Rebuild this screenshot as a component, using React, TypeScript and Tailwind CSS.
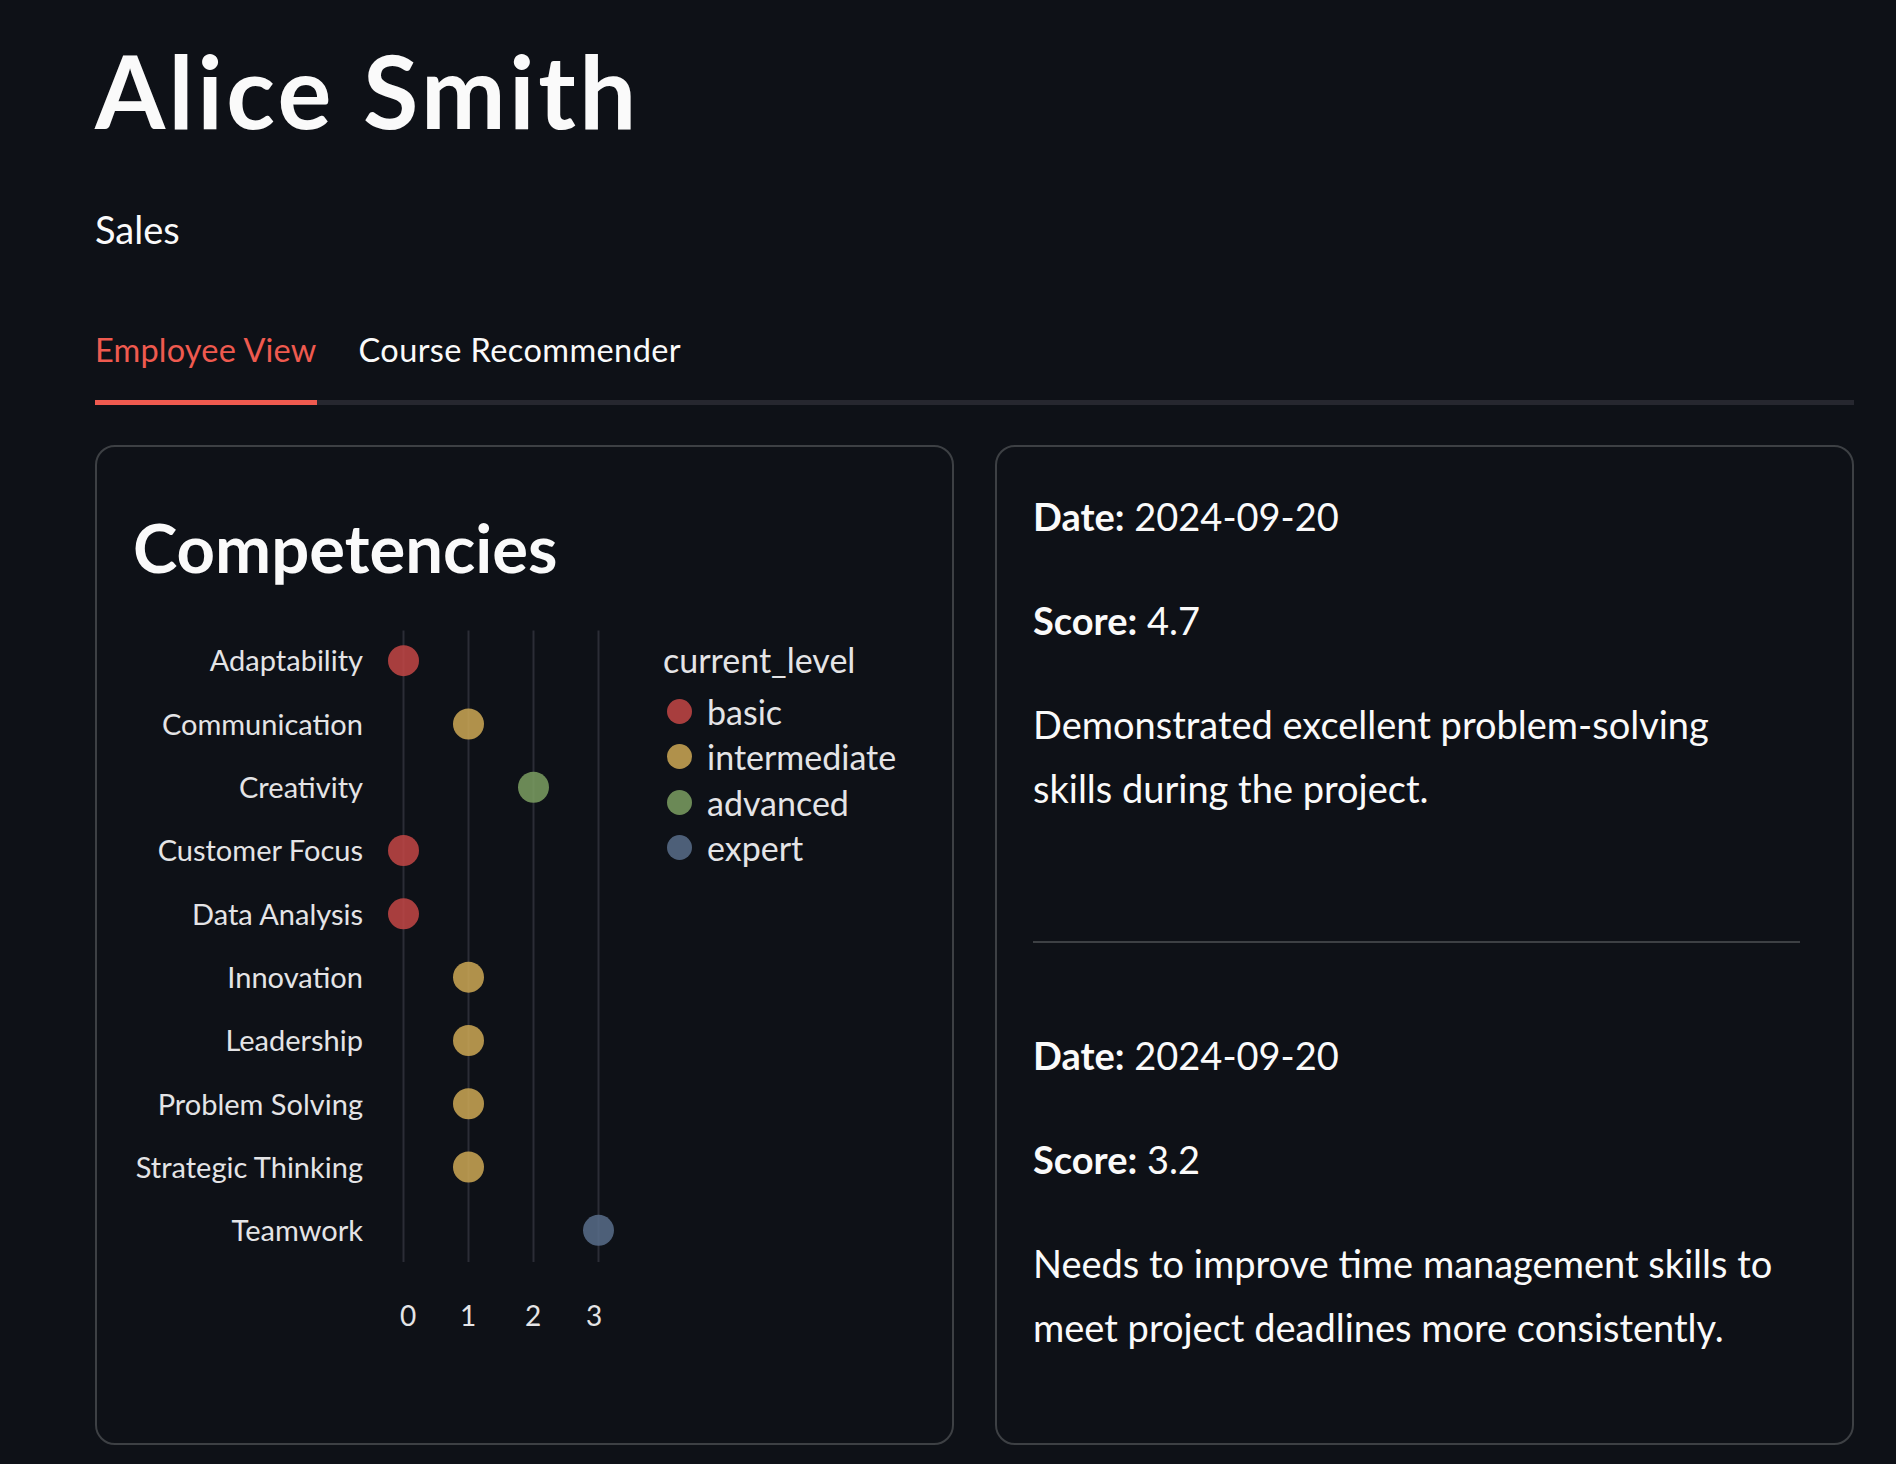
const competencies = [
  { name: "Adaptability", level: 0 },
  { name: "Communication", level: 1 },
  { name: "Creativity", level: 2 },
  { name: "Customer Focus", level: 0 },
  { name: "Data Analysis", level: 0 },
  { name: "Innovation", level: 1 },
  { name: "Leadership", level: 1 },
  { name: "Problem Solving", level: 1 },
  { name: "Strategic Thinking", level: 1 },
  { name: "Teamwork", level: 3 },
];

const levels = [
  { name: "basic", color: "#c34645" },
  { name: "intermediate", color: "#cca855" },
  { name: "advanced", color: "#7b9f62" },
  { name: "expert", color: "#586d89" },
];

const ROW = 63.3;
const COL = 65;

const feedback = [
  {
    date: "2024-09-20",
    score: "4.7",
    text: "Demonstrated excellent problem-solving skills during the project.",
  },
  {
    date: "2024-09-20",
    score: "3.2",
    text: "Needs to improve time management skills to meet project deadlines more consistently.",
  },
];

function CompetencyChart() {
  const height = ROW * competencies.length;
  return (
    <div className="mt-[41px] flex">
      <div className="flex w-[230px] flex-col">
        {competencies.map((c) => (
          <div
            key={c.name}
            className="flex h-[63.3px] items-center justify-end text-[29px] text-[#e4e4e6]"
          >
            {c.name}
          </div>
        ))}
      </div>

      <div className="ml-[7.5px] flex w-[260px] flex-col">
        <svg width={260} height={height} className="block">
          {[0, 1, 2, 3].map((i) => (
            <line
              key={i}
              x1={COL / 2 + i * COL}
              x2={COL / 2 + i * COL}
              y1={1.5}
              y2={height}
              stroke="#2b2d36"
              strokeWidth={2}
            />
          ))}
          {competencies.map((c, i) => (
            <circle
              key={c.name}
              cx={COL / 2 + c.level * COL}
              cy={ROW / 2 + i * ROW}
              r={15.5}
              fill={levels[c.level].color}
              fillOpacity={0.85}
            />
          ))}
        </svg>
        <div className="mt-[36px] grid grid-cols-4 text-center text-[28px] leading-[34px] text-[#e4e4e6]">
          <span className="pl-[10px]">0</span>
          <span>1</span>
          <span>2</span>
          <span className="pr-[8px]">3</span>
        </div>
      </div>

      <div className="ml-[32.5px] mt-[11px] flex flex-col">
        <div className="text-[34px] leading-[1.2] text-[#e4e4e6]">current_level</div>
        <div className="mt-[8px] flex flex-col">
          {levels.map((l) => (
            <div key={l.name} className="flex h-[45.5px] items-center">
              <span
                className="ml-[4px] h-[25px] w-[25px] shrink-0 rounded-full opacity-85"
                style={{ backgroundColor: l.color }}
              />
              <span className="ml-[15px] text-[34px] text-[#e4e4e6]">{l.name}</span>
            </div>
          ))}
        </div>
      </div>
    </div>
  );
}

function FeedbackEntry({ date, score, text }: { date: string; score: string; text: string }) {
  return (
    <div className="text-[38px] leading-[64px]">
      <p className="mb-[40px]">
        <span className="font-bold">Date:</span> {date}
      </p>
      <p className="mb-[40px]">
        <span className="font-bold">Score:</span> {score}
      </p>
      <p className="max-w-[750px]">{text}</p>
    </div>
  );
}

export default function App() {
  return (
    <div className="min-h-screen bg-[#0e1117] pl-[95px] pr-[42px] font-['Lato',sans-serif] text-[#fafafa]">
      <h1 className="pt-[30px] text-[101px] font-bold leading-[1.2] tracking-[3.5px]">Alice Smith</h1>
      <p className="mt-[46px] text-[38px] leading-[64px]">Sales</p>

      <div className="mt-[69px] flex gap-[42px] border-b-[5px] border-[#26272f]">
        <button className="-mb-[5px] border-b-[5px] border-[#ef5a4f] pb-[31px] text-[32.5px] leading-[1.2] tracking-[0.2px] text-[#ef5a4f]">
          Employee View
        </button>
        <button className="-mb-[5px] border-b-[5px] border-transparent pb-[31px] text-[32.5px] leading-[1.2] tracking-[0.4px] text-[#fafafa]">
          Course Recommender
        </button>
      </div>

      <div className="mt-[40px] grid grid-cols-2 gap-[41px]">
        <section className="h-[1000px] rounded-[20px] border-2 border-[#3d4044] pl-[36px] pt-[60px]">
          <h2 className="text-[67px] font-bold leading-[1.2]">Competencies</h2>
          <CompetencyChart />
        </section>

        <section className="h-[1000px] rounded-[20px] border-2 border-[#3d4044] pl-[36px] pr-[52px] pt-[37px]">
          <FeedbackEntry {...feedback[0]} />
          <hr className="mt-[121px] border-t-2 border-[#3d4044]" />
          <div className="mt-[80px]">
            <FeedbackEntry {...feedback[1]} />
          </div>
        </section>
      </div>
    </div>
  );
}
